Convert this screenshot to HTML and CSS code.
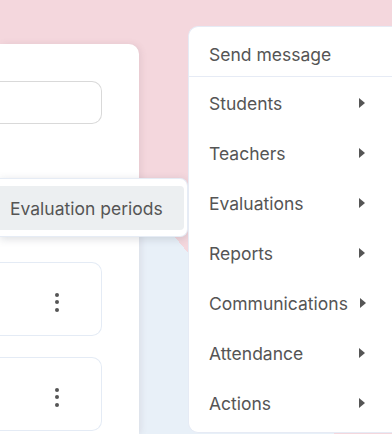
FILE: index.html
```html
<!DOCTYPE html>
<html>
<head>
<meta charset="utf-8">
<link rel="stylesheet" href="styles.css">
</head>
<body>
<div class="page">
  <section class="card">
    <div class="search"></div>
    <div class="list">
      <div class="item"><span class="kebab"><i></i><i></i><i></i></span></div>
      <div class="item"><span class="kebab"><i></i><i></i><i></i></span></div>
    </div>
  </section>

  <div class="popup">
    <div class="popup-item">Evaluation periods</div>
  </div>

  <nav class="menu">
    <div class="menu-item first"><span class="label">Send message</span></div>
    <div class="menu-item"><span class="label">Students</span><span class="arrow"></span></div>
    <div class="menu-item"><span class="label">Teachers</span><span class="arrow"></span></div>
    <div class="menu-item"><span class="label">Evaluations</span><span class="arrow"></span></div>
    <div class="menu-item"><span class="label">Reports</span><span class="arrow"></span></div>
    <div class="menu-item"><span class="label">Communications</span><span class="arrow"></span></div>
    <div class="menu-item"><span class="label">Attendance</span><span class="arrow"></span></div>
    <div class="menu-item"><span class="label">Actions</span><span class="arrow"></span></div>
  </nav>
</div>
</body>
</html>
```

FILE: styles.css
```css
html, body {
  margin: 0;
  padding: 0;
  width: 392px;
  height: 434px;
  overflow: hidden;
}
body {
  font-family: Inter, "Noto Sans", sans-serif;
  color: #555;
  background-color: #f4d7dd;
  background-image: linear-gradient(231deg, #f4d7dd 0, #f4d7dd 280px, #e8f0f8 280px, #e8f0f8 100%);
  background-repeat: no-repeat;
  background-position: 0 60px;
  background-size: 392px 374px;
}
.page {
  position: relative;
  width: 392px;
  height: 434px;
  padding-top: 44px;
  box-sizing: border-box;
}
.card {
  width: 139px;
  height: 390px;
  background: #fff;
  border-radius: 0 10px 0 0;
  box-shadow: 2px 0 6px rgba(120, 90, 110, 0.12);
  padding: 37px 37px 0 0;
  box-sizing: border-box;
}
.search {
  height: 43px;
  border: 1px solid #d9d9d9;
  border-left: none;
  border-radius: 0 10px 10px 0;
  box-sizing: border-box;
}
.list {
  margin-top: 138px;
  display: flex;
  flex-direction: column;
  gap: 21px;
}
.item {
  height: 74px;
  border: 1px solid #e4ebf5;
  border-left: none;
  border-radius: 0 10px 10px 0;
  box-sizing: border-box;
  display: flex;
  align-items: center;
  padding-left: 55px;
  padding-top: 6px;
}
.kebab {
  display: flex;
  flex-direction: column;
  gap: 3.5px;
}
.kebab i {
  display: block;
  width: 4px;
  height: 4px;
  border-radius: 50%;
  background: #555;
}
.popup {
  position: absolute;
  left: 0;
  top: 178px;
  width: 188px;
  height: 59px;
  background: #fff;
  border-radius: 0 8px 8px 0;
  box-shadow: 0 2px 8px rgba(60, 70, 90, 0.18);
  border: 1px solid #e6ecf5;
  border-left: none;
  box-sizing: border-box;
  padding: 7px 3px 6px 0;
}
.popup-item {
  height: 44px;
  background: #eceff1;
  border-radius: 0 4px 4px 0;
  display: flex;
  align-items: center;
  padding-left: 10px;
  font-size: 17.5px;
  color: #555;
}
.menu {
  position: absolute;
  left: 188px;
  top: 26px;
  width: 204px;
  height: 407px;
  background: #fff;
  border: 1px solid #e6ebf5;
  border-right: none;
  border-radius: 10px 0 0 10px;
  box-sizing: border-box;
}
.menu-item {
  height: 50px;
  display: flex;
  align-items: center;
  padding-left: 20px;
  font-size: 17.5px;
  color: #555;
}
.menu-item.first {
  height: 50px;
  padding-top: 5px;
  box-sizing: border-box;
  border-bottom: 1px solid #e6ebf5;
  margin-bottom: 1px;
}
.label {
  min-width: 138px;
}
.arrow {
  margin-left: 12px;
  width: 0;
  height: 0;
  border-top: 5px solid transparent;
  border-bottom: 5px solid transparent;
  border-left: 6px solid #555;
}
```
